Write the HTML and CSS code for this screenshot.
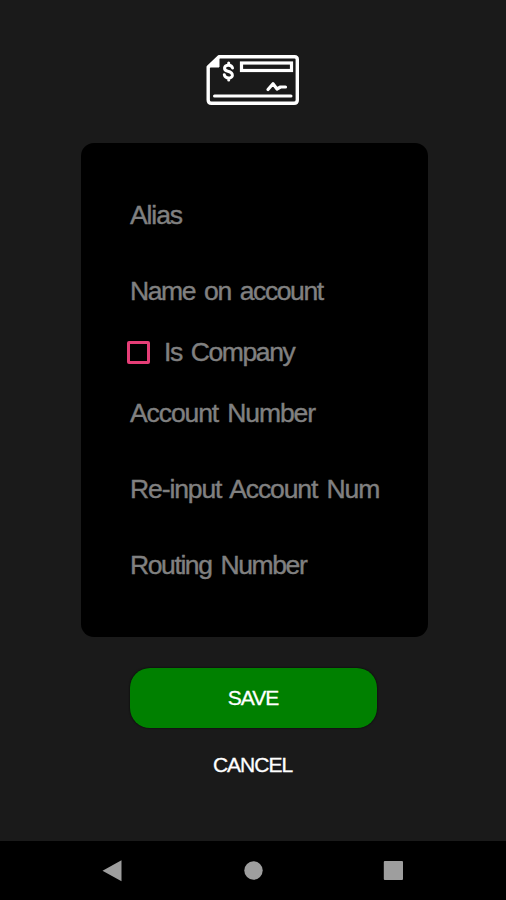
FILE: index.html
```html
<!DOCTYPE html>
<html lang="en">
<head>
<meta charset="utf-8">
<title>Add account</title>
<link rel="stylesheet" href="styles.css">
</head>
<body>
<main class="screen">
  <svg class="check-icon" viewBox="0 0 94 52" fill="none" stroke="#fff" stroke-linecap="round" stroke-linejoin="round">
    <path stroke-width="3.4" d="M13 2.7H88.5Q91.3 2.7 91.3 5.5V46Q91.3 49.3 88 49.3H5.5Q2.2 49.3 2.2 46V13Z"/>
    <path fill="#fff" stroke-width="1" d="M13 2V13H2Z"/>
    <rect x="35.5" y="9" width="50" height="7.5" stroke-width="3.2" stroke-linejoin="miter"/>
    <path stroke-width="3" d="M8.5 42H85"/>
    <path stroke-width="3" d="M26.5 14C26 12 24.7 11.3 22.7 11.3C17.5 11.3 17.2 16.2 21.8 17.3C28 18.7 27.5 24 22.7 24C20.3 24 18.8 23 18.3 20.7M22.7 9V11M22.7 24V26"/>
    <path stroke-width="3.2" d="M62 35.5L67 29.8L71 35L74.5 33H79.5"/>
  </svg>
  <form class="card">
    <div class="field alias">Alias</div>
    <div class="field name">Name on account</div>
    <label class="check"><span class="box"></span><span class="company">Is Company</span></label>
    <div class="field account">Account Number</div>
    <div class="field reinput">Re-input Account Num</div>
    <div class="field routing">Routing Number</div>
  </form>
  <button class="save"><span>SAVE</span></button>
  <button class="cancel"><span>CANCEL</span></button>
  <nav class="navbar">
    <svg viewBox="0 0 506 59" fill="#9e9e9e">
      <path d="M102.5 29.7L121.5 19.3V40.3Z"/>
      <circle cx="253.5" cy="29.5" r="9.2"/>
      <rect x="383.8" y="20" width="19.2" height="19" rx="1"/>
    </svg>
  </nav>
</main>
</body>
</html>
```
FILE: styles.css
```css
* { box-sizing: border-box; }
body {
  margin: 0;
  background: #1a1a1a;
  font-family: "Liberation Sans", Arial, sans-serif;
}
.screen {
  width: 506px;
  height: 900px;
  display: flex;
  flex-direction: column;
  align-items: center;
  overflow: hidden;
}
.check-icon {
  width: 94px;
  height: 52px;
  margin: 54px 0 37px;
  flex: none;
}
.card {
  width: 347px;
  height: 494px;
  flex: none;
  margin-left: 3px;
  padding: 34px 0 0 49px;
  background: #000;
  border-radius: 13px;
  color: #808080;
  font-size: 26.5px;
  line-height: 76px;
  letter-spacing: -1.4px;
  word-spacing: 3px;
  white-space: nowrap;
  -webkit-text-stroke: 0.4px #808080;
}
.field { height: 76px; }
.alias { letter-spacing: -1.1px; }
.account { letter-spacing: -1.1px; }
.reinput { letter-spacing: -1.1px; }
.check {
  display: flex;
  align-items: center;
  height: 46px;
  line-height: 46px;
}
.box {
  width: 23px;
  height: 23px;
  margin: 1px 14px 0 -3px;
  border: 3px solid #e63e77;
  border-radius: 2px;
}
.save, .cancel {
  border: 0;
  padding: 0;
  font: 21px "Liberation Sans", Arial, sans-serif;
  letter-spacing: -1px;
  color: #fff;
  -webkit-text-stroke: 0.3px #fff;
}
.save {
  width: 247px;
  height: 60px;
  flex: none;
  margin-top: 31px;
  border-radius: 20px;
  background: #008000;
  box-shadow: 0 0 2px #000;
}
.cancel {
  height: 40px;
  margin: 17px 1px 0 0;
  background: none;
}
.navbar {
  width: 506px;
  height: 59px;
  margin-top: auto;
  background: #000;
}
.navbar svg { display: block; width: 506px; height: 59px; }
```
